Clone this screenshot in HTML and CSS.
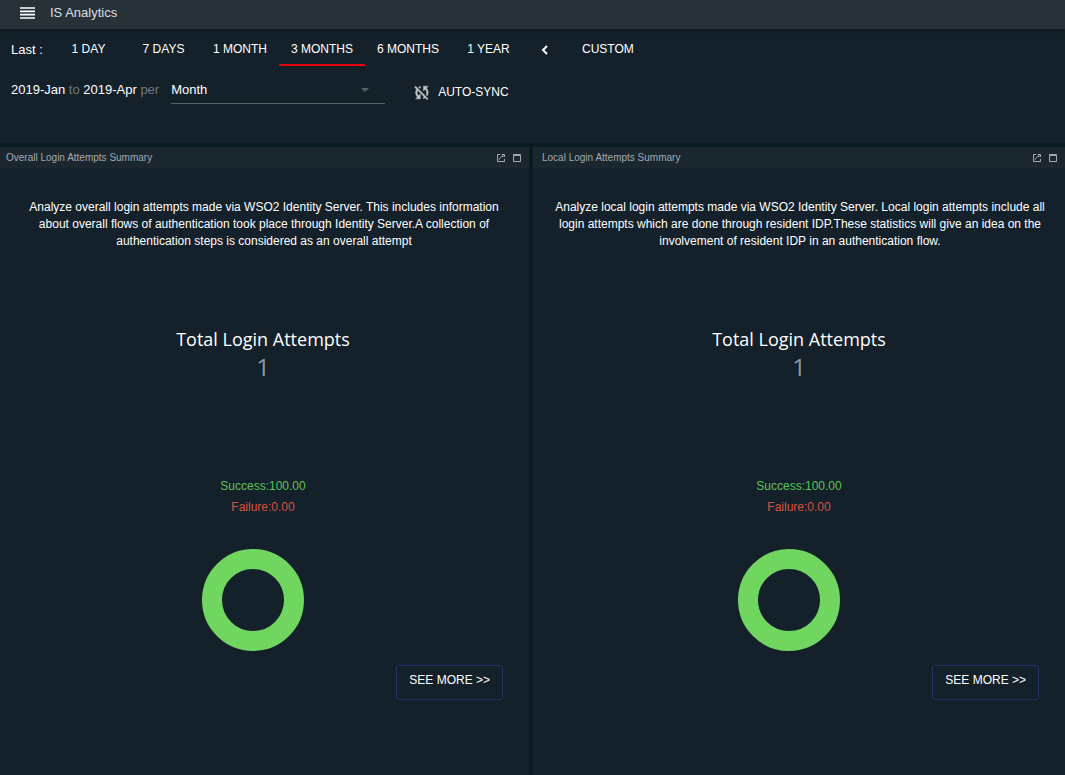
FILE: index.html
```html
<!DOCTYPE html>
<html lang="en">
<head>
<meta charset="utf-8">
<title>IS Analytics</title>
<link rel="stylesheet" href="styles.css">
</head>
<body>
<svg class="sprite" aria-hidden="true">
  <symbol id="popout" viewBox="0 0 10 10"><path d="M4 1.5H1.5v7h7V6M3.5 6.5C3.5 4.500 5 3.500 7 3.500M6 1.500h2.500V4L6 1.500z" fill="none" stroke="currentColor"/></symbol>
  <symbol id="maximize" viewBox="0 0 10 10"><path d="M1.500 1.500h7v7h-7zM1 2.500h8" fill="none" stroke="currentColor"/></symbol>
</svg>
<header class="appbar">
  <button class="menu" aria-label="Menu"><svg viewBox="0 0 15 12"><path d="M0 1h15M0 4.300h15M0 7.700h15M0 11h15" stroke="currentColor" stroke-width="1.700"/></svg></button>
  <h1 class="appname">IS Analytics</h1>
</header>
<section class="filters">
  <nav class="ranges">
    <span class="last">Last :</span>
    <button class="range">1 DAY</button>
    <button class="range">7 DAYS</button>
    <button class="range">1 MONTH</button>
    <button class="range active">3 MONTHS</button>
    <button class="range">6 MONTHS</button>
    <button class="range">1 YEAR</button>
    <button class="collapse" aria-label="Collapse"><svg viewBox="0 0 8 10"><path d="M6 1L2 5l4 4" fill="none" stroke="currentColor" stroke-width="2"/></svg></button>
    <button class="range custom">CUSTOM</button>
  </nav>
  <div class="period">
    <label class="dates" for="granularity">2019-Jan <span class="dim">to</span> 2019-Apr <span class="dim">per</span></label>
    <div class="picker">
      <select id="granularity" class="select"><option>Month</option></select>
      <svg class="caret" viewBox="0 0 8 4"><path d="M0 0h8L4 4z" fill="currentColor"/></svg>
    </div>
    <button class="sync"><svg viewBox="2 3 19 18"><path fill="currentColor" stroke="currentColor" stroke-width=".6" d="M10 6.35V4.26c-.8.21-1.55.54-2.23.96l1.46 1.46c.25-.12.5-.24.77-.33zm-7.14-.94l2.36 2.36C4.45 8.99 4 10.44 4 12c0 2.21.91 4.2 2.36 5.64L4 20h6v-6l-2.24 2.24C6.68 15.15 6 13.66 6 12c0-1 .25-1.94.68-2.77l8.08 8.08c-.25.13-.5.25-.77.34v2.09c.8-.21 1.55-.54 2.23-.96l2.36 2.36 1.27-1.27L4.14 4.14 2.86 5.41zM20 4h-6v6l2.24-2.24C17.32 8.85 18 10.34 18 12c0 1-.25 1.94-.68 2.77l1.46 1.46C19.55 15.01 20 13.56 20 12c0-2.21-.91-4.2-2.36-5.64L20 4z"/></svg>AUTO-SYNC</button>
  </div>
</section>
<main class="board">
  <article class="panel">
    <header class="panelbar">
      <h2 class="paneltitle">Overall Login Attempts Summary</h2>
      <button class="tool" aria-label="Open in new view"><svg><use href="#popout"/></svg></button>
      <button class="tool" aria-label="Maximize"><svg><use href="#maximize"/></svg></button>
    </header>
    <p class="about">Analyze overall login attempts made via WSO2 Identity Server. This includes information about overall flows of authentication took place through Identity Server.A collection of authentication steps is considered as an overall attempt</p>
    <h3 class="total">Total Login Attempts</h3>
    <p class="count">1</p>
    <p class="success">Success:100.00</p>
    <p class="failure">Failure:0.00</p>
    <svg class="donut" viewBox="0 0 102 102" role="img" aria-label="100% success"><circle cx="51" cy="51" r="41" fill="none" stroke="#70d660" stroke-width="20"/></svg>
    <button class="more">SEE MORE &gt;&gt;</button>
  </article>
  <article class="panel">
    <header class="panelbar">
      <h2 class="paneltitle">Local Login Attempts Summary</h2>
      <button class="tool" aria-label="Open in new view"><svg><use href="#popout"/></svg></button>
      <button class="tool" aria-label="Maximize"><svg><use href="#maximize"/></svg></button>
    </header>
    <p class="about">Analyze local login attempts made via WSO2 Identity Server. Local login attempts include all login attempts which are done through resident IDP.These statistics will give an idea on the involvement of resident IDP in an authentication flow.</p>
    <h3 class="total">Total Login Attempts</h3>
    <p class="count">1</p>
    <p class="success">Success:100.00</p>
    <p class="failure">Failure:0.00</p>
    <svg class="donut" viewBox="0 0 102 102" role="img" aria-label="100% success"><circle cx="51" cy="51" r="41" fill="none" stroke="#70d660" stroke-width="20"/></svg>
    <button class="more">SEE MORE &gt;&gt;</button>
  </article>
</main>
</body>
</html>
```
FILE: styles.css
```css
* { box-sizing: border-box; margin: 0; }

body {
  display: flex;
  flex-direction: column;
  min-height: 100vh;
  overflow-x: hidden;
  background: #081a22;
  color: #fff;
  font: 12px/17px "Liberation Sans", Arial, sans-serif;
}

button, select {
  padding: 0;
  border: 0;
  background: none;
  color: inherit;
  font: inherit;
}

svg { display: block; }
.sprite { position: absolute; width: 0; height: 0; }

.appbar {
  display: flex;
  align-items: center;
  gap: 15px;
  height: 29px;
  padding: 0 20px 4px;
  background: #263238;
  box-shadow: 0 1px 4px #0a151b;
  z-index: 1;
}
.menu svg { width: 15px; height: 12px; }
.appname { color: #dcdfe0; font-size: 13px; font-weight: 400; }

.filters {
  height: 114px;
  padding: 6px 11px 0;
  background: #14212a;
}
.ranges { display: flex; }
.last { width: 40px; font-size: 13px; line-height: 30px; }
.range {
  min-width: 75px;
  height: 31px;
  padding: 0 12px;
  border-bottom: 2px solid transparent;
}
.range.active { border-bottom-color: #e6000a; }
.collapse { display: grid; place-items: center; width: 38px; height: 30px; }
.collapse svg { width: 8px; height: 10px; }
.custom { margin-left: 6px; }

.period { display: flex; margin-top: 9px; }
.dates { font-size: 13px; line-height: 30px; white-space: nowrap; }
.dim { color: #6f797e; }
.picker { position: relative; width: 214px; margin-left: 12px; }
.select {
  width: 100%;
  height: 29px;
  border-bottom: 1px solid #56646a;
  font-size: 13px;
  appearance: none;
}
.caret { position: absolute; right: 16px; top: 13px; width: 8px; height: 4px; color: #56646a; pointer-events: none; }
.sync { display: flex; align-items: center; gap: 9px; height: 35px; margin-left: 29px; }
.sync svg { width: 15px; height: 15px; color: #c2c6c8; }

.board {
  display: grid;
  grid-template-columns: 1fr 1fr;
  gap: 4px;
  flex: 1;
  margin: 4px 0 0 -3px;
}
.panel {
  display: flex;
  flex-direction: column;
  align-items: center;
  background: #14212a;
  text-align: center;
}
.panelbar {
  display: flex;
  align-items: center;
  align-self: stretch;
  gap: 6px;
  height: 21px;
  padding: 0 7px 0 9px;
  background: #1a272f;
  color: #a4aaad;
}
.paneltitle { margin-right: auto; font-size: 10px; font-weight: 400; }
.tool svg { width: 10px; height: 10px; }
.about { padding: 0 17px 0 19px; margin-top: 31px; }
.total {
  margin-top: 75px;
  font: 500 18px/28px "Open Sans", sans-serif;
}
.count { color: #8d9ba3; font: 500 24px/28px "Open Sans", sans-serif; }
.success { margin-top: 97px; color: #5fc257; }
.failure { margin-top: 4px; color: #d9523f; }
.donut { width: 102px; height: 102px; margin: 33px 20px 0 0; }
.more {
  align-self: flex-end;
  height: 35px;
  margin: 14px 26px 0 0;
  padding: 0 12px 4px;
  border: 1px solid #26336a;
  border-radius: 3px;
}
```
